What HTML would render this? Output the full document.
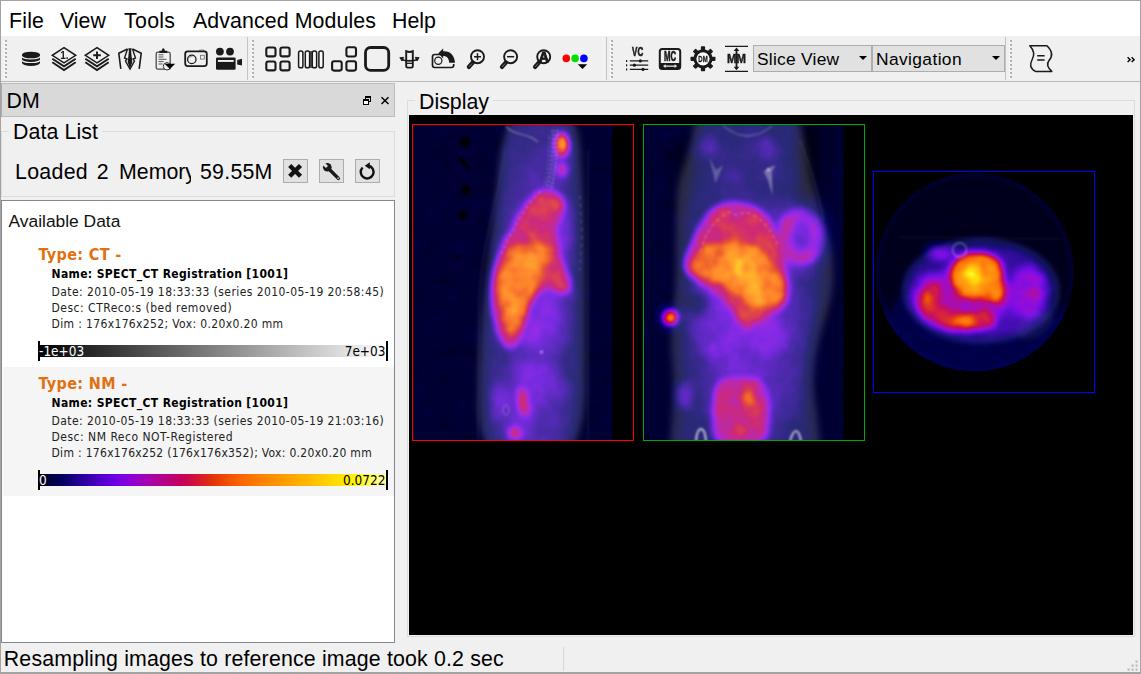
<!DOCTYPE html>
<html lang="en">
<head>
<meta charset="utf-8">
<title>DM - Display</title>
<style>
html,body{margin:0;padding:0;background:#f0f0f0;overflow:hidden;}
body{width:1141px;height:674px;position:relative;font-family:"Liberation Sans",Arial,sans-serif;color:#000;}
.abs{position:absolute;}
#win{position:absolute;left:0;top:0;width:1141px;height:674px;background:#f0f0f0;overflow:hidden;}
#menubar{position:absolute;left:1px;top:1px;width:1139px;height:35px;background:#fff;}
#menubar span{position:absolute;top:1px;line-height:38px;font-size:21.33px;white-space:nowrap;}
#toolbar{position:absolute;left:1px;top:36px;width:1139px;height:45px;background:#f0f0f0;}
.handle{position:absolute;top:4px;width:3px;height:38px;}
.handle:before{content:"";position:absolute;left:0;top:1px;width:2px;height:38px;background-image:repeating-linear-gradient(to bottom,#fff 0,#fff 2px,transparent 2px,transparent 4px);}
.handle:after{content:"";position:absolute;left:1px;top:0;width:2px;height:38px;background-image:repeating-linear-gradient(to bottom,#b0b0b0 0,#b0b0b0 2px,transparent 2px,transparent 4px);}
.tsep{position:absolute;top:1px;width:1px;height:43px;background:#c4c4c4;}
.ico{position:absolute;top:10px;width:26px;height:26px;}
.combo{position:absolute;top:9px;height:27px;box-sizing:border-box;border:1px solid #adadad;background:#e1e1e1;font-size:17.4px;line-height:26px;padding-left:4px;white-space:nowrap;}
.combo i{position:absolute;right:4.5px;top:10px;width:0;height:0;border-left:4px solid transparent;border-right:4px solid transparent;border-top:4px solid #000;}
#dmtitle{position:absolute;left:1px;top:83px;width:394px;height:34px;box-sizing:border-box;background:#d9d9d9;border:1px solid #bdbdbd;border-left-color:#a8a8a8;}
#dmtitle span{position:absolute;left:4.5px;top:0.8px;line-height:33px;font-size:21.33px;}
.gb{position:absolute;box-sizing:border-box;border:1px solid #dcdcdc;}
.gbl{position:absolute;font-size:21.33px;line-height:24px;background:#f0f0f0;white-space:nowrap;}
.btn{position:absolute;top:159px;width:25px;height:24px;box-sizing:border-box;border:1px solid #adadad;background:#e1e1e1;}
#list{position:absolute;left:1px;top:200px;width:394px;height:443px;box-sizing:border-box;border:1px solid #828790;background:#fff;overflow:hidden;}
.tah{font-family:"DejaVu Sans Condensed","DejaVu Sans",sans-serif;}
.item{position:absolute;left:1px;width:391px;height:129px;}
.item div{position:absolute;white-space:nowrap;}
.type{left:35.5px;margin-top:1px;font-weight:bold;font-size:16px;color:#e2700f;letter-spacing:.35px;line-height:20px;}
.nm{left:48.5px;margin-top:1px;font-weight:bold;font-size:12px;letter-spacing:.36px;line-height:16px;color:#000;}
.ln{left:48.5px;margin-top:1px;font-size:12px;letter-spacing:.43px;line-height:16px;color:#222;}
.bar{left:35px;width:350px;height:12px;}
.mk{width:2px;height:20px;background:#000;}
.bt{font-size:13.5px;line-height:14px;letter-spacing:0;}
#view{position:absolute;left:409px;top:115px;width:724px;height:520px;background:#000;overflow:hidden;}
#status{position:absolute;left:1px;top:644px;width:1139px;height:29px;}
#status span{position:absolute;left:2.8px;top:0.7px;line-height:29px;font-size:21.33px;white-space:nowrap;letter-spacing:.165px;}
</style>
</head>
<body>
<div id="win">

<div id="menubar">
<span style="left:8px;letter-spacing:.2px">File</span>
<span style="left:59px">View</span>
<span style="left:123px;letter-spacing:.3px">Tools</span>
<span style="left:192px;letter-spacing:.1px">Advanced Modules</span>
<span style="left:391px">Help</span>
</div>

<div id="toolbar">
<div class="handle" style="left:3px"></div>
<div class="tsep" style="left:246px"></div>
<div class="handle" style="left:250px"></div>
<div class="tsep" style="left:605px"></div>
<div class="handle" style="left:609px"></div>
<div class="tsep" style="left:1004px"></div>
<div class="handle" style="left:1008px"></div>
<svg width="1139" height="45" viewBox="1 36 1139 45" style="position:absolute;left:0;top:0;opacity:.999" font-family="Liberation Sans, Arial, sans-serif">
<g fill="#1a1a1a"><path d="M22,54.8 v8 a9,3.1 0 0 0 18,0 v-8 z"/><ellipse cx="31" cy="54.8" rx="9" ry="3.1"/></g>
<path d="M21.5,55.8 a9.5,3.1 0 0 0 19,0" fill="none" stroke="#f0f0f0" stroke-width="1.1"/><path d="M21.5,59.4 a9.5,3.1 0 0 0 19,0" fill="none" stroke="#f0f0f0" stroke-width="1.1"/>
<g fill="none" stroke="#1a1a1a" stroke-linejoin="miter"><path d="M64,47.6 L75.7,55.3 L64,62.8 L52.3,55.3 Z" stroke-width="1.5"/><path d="M52.3,58.7 L64,66.3 L75.7,58.7" stroke-width="1.9"/><path d="M52.3,62.3 L64,70 L75.7,62.3" stroke-width="1.9"/></g><text x="64.3" y="58.800000000000004" font-size="10" font-weight="bold" text-anchor="middle" fill="#1a1a1a">1.</text>
<g fill="none" stroke="#1a1a1a" stroke-linejoin="miter"><path d="M97,47.6 L108.7,55.3 L97,62.8 L85.3,55.3 Z" stroke-width="1.5"/><path d="M85.3,58.7 L97,66.3 L108.7,58.7" stroke-width="1.9"/><path d="M85.3,62.3 L97,70 L108.7,62.3" stroke-width="1.9"/></g><path d="M93.2,55.3 h7.6 M97,51.6 v7.4" stroke="#1a1a1a" stroke-width="1.9" fill="none"/>
<g fill="none" stroke="#1a1a1a" stroke-width="1.6" stroke-linejoin="miter"><path d="M120.8,68.8 L118.8,53.3 L127.5,49 "/><path d="M139.2,68.8 L141.2,53.3 L132.5,49 "/><path d="M127.5,49 L124.5,58 L127,59 L125.5,61 L130,69 L134.5,61 L133,59 L135.5,58 L132.5,49" stroke-width="1.4"/></g>
<path d="M128.3,48.3 h3.4 l-0.6,3 l1.2,11 l-2.3,6.5 l-2.3,-6.5 l1.2,-11 z" fill="#1a1a1a"/>
<g fill="none" stroke="#4a4a4a" stroke-width="1.3"><rect x="156.2" y="52.2" width="14" height="17" rx="1.8"/></g>
<path d="M159.3,53 v-2.3 h2.3 l0.8,-1.9 a1,1 0 0 1 1.8,0 l0.8,1.9 h2.3 v2.3 z" fill="#1a1a1a"/>
<g stroke="#555" stroke-width="1"><path d="M158.5,54.8 h5"/><path d="M158.5,57 h5"/><path d="M158.5,59.3 h8"/><path d="M158.5,61.6 h5"/><path d="M158.5,64 h4"/></g>
<circle cx="167" cy="66.3" r="3.7" fill="#f0f0f0" stroke="#333" stroke-width="1"/>
<path d="M164.6,63.7 h10.6 l-5.3,5.4 z" fill="#000"/>
<path d="M199.5,51 v-1 h4.5 v1" fill="none" stroke="#999" stroke-width="1"/>
<rect x="185.2" y="51.3" width="21.6" height="14.8" rx="2.5" fill="none" stroke="#1a1a1a" stroke-width="1.8"/>
<circle cx="191.8" cy="59.4" r="4.2" fill="none" stroke="#1a1a1a" stroke-width="1.3"/>
<path d="M189.5,58 a2.6,2.6 0 0 1 3,-1.8" fill="none" stroke="#777" stroke-width="0.8"/>
<rect x="200.5" y="55.3" width="3.8" height="3.8" fill="none" stroke="#777" stroke-width="0.9"/>
<g fill="#1a1a1a"><circle cx="219.9" cy="51.6" r="3.9"/><circle cx="230" cy="51.6" r="3.9"/><rect x="216" y="57.4" width="19.6" height="12.4" rx="1.2"/><path d="M237.2,60 L242,58.8 V65.6 L237.2,64.4 Z"/></g>
<rect x="217.9" y="60" width="15.8" height="1.9" fill="#f4f4f4"/>
<rect x="266.3" y="47.5" width="9.2" height="8.9" rx="2" fill="none" stroke="#1a1a1a" stroke-width="2.1"/>
<rect x="280.4" y="47.5" width="9.2" height="8.9" rx="2" fill="none" stroke="#1a1a1a" stroke-width="2.1"/>
<rect x="266.3" y="61.5" width="9.2" height="8.9" rx="2" fill="none" stroke="#1a1a1a" stroke-width="2.1"/>
<rect x="280.4" y="61.5" width="9.2" height="8.9" rx="2" fill="none" stroke="#1a1a1a" stroke-width="2.1"/>
<rect x="310" y="51" width="2" height="17" fill="#555"/>
<rect x="298.6" y="50.9" width="4.3" height="16.9" rx="1.8" fill="#fafafa" stroke="#1a1a1a" stroke-width="1.5"/>
<rect x="305.3" y="50.9" width="4.3" height="16.9" rx="1.8" fill="#fafafa" stroke="#1a1a1a" stroke-width="1.5"/>
<rect x="312.3" y="50.9" width="4.3" height="16.9" rx="1.8" fill="#fafafa" stroke="#1a1a1a" stroke-width="1.5"/>
<rect x="318.9" y="50.9" width="4.3" height="16.9" rx="1.8" fill="#fafafa" stroke="#1a1a1a" stroke-width="1.5"/>
<rect x="332.1" y="61.3" width="9.6" height="9.3" rx="2" fill="none" stroke="#1a1a1a" stroke-width="2.1"/>
<rect x="346.4" y="47.2" width="9.6" height="9.3" rx="2" fill="none" stroke="#1a1a1a" stroke-width="2.1"/>
<rect x="346.4" y="61.3" width="9.6" height="9.3" rx="2" fill="none" stroke="#1a1a1a" stroke-width="2.1"/>
<rect x="365.5" y="47.5" width="23.2" height="22.8" rx="5" fill="none" stroke="#1a1a1a" stroke-width="2.8"/>
<path d="M406.2,51.2 q3.3,1.6 6.6,0 v15 q0,1.4 -1.4,1.4 h-3.8 q-1.4,0 -1.4,-1.4 z" fill="none" stroke="#1a1a1a" stroke-width="1.9"/>
<path d="M406.5,63.3 h6" stroke="#1a1a1a" stroke-width="1.3"/>
<path d="M401,59.5 q8.5,2.6 17,0" fill="none" stroke="#1a1a1a" stroke-width="1.7"/>
<path d="M399.8,57.6 l4,-0.3 l-1.8,3.6 z M419.2,57.6 l-4,-0.3 l1.8,3.6 z" fill="#1a1a1a" stroke="#1a1a1a" stroke-width="0.8"/>
<path d="M441,54.5 h-6.3 q-2.2,0 -2.2,2.2 v8.6 q0,2.2 2.2,2.2 h16.8 q2.2,0 2.2,-2.2 v-1.3" fill="none" stroke="#1a1a1a" stroke-width="1.7"/>
<circle cx="438.3" cy="60.7" r="3.6" fill="none" stroke="#1a1a1a" stroke-width="1.2"/>
<path d="M438.3,53.2 L443.2,48.6 L443.2,51.2 C450,50.6 454.8,55.5 455,62.8 L449.2,62.8 C449,58.5 447,56 443.2,56 L443.2,58.4 Z" fill="#1a1a1a"/>
<path d="M472.9,62.3 L468.9,66.9" stroke="#1a1a1a" stroke-width="4.3" stroke-linecap="round"/><path d="M471.7,63.9 L469.2,66.7" stroke="#8a8a8a" stroke-width="0.8" stroke-linecap="round"/><circle cx="477.5" cy="56.7" r="6.5" fill="#f0f0f0" stroke="#1a1a1a" stroke-width="1.9"/><path d="M474,56.7 h7 M477.5,53.2 v7" stroke="#1a1a1a" stroke-width="1.5"/>
<path d="M506,62.3 L502,66.9" stroke="#1a1a1a" stroke-width="4.3" stroke-linecap="round"/><path d="M504.8,63.9 L502.3,66.7" stroke="#8a8a8a" stroke-width="0.8" stroke-linecap="round"/><circle cx="510.6" cy="56.7" r="6.5" fill="#f0f0f0" stroke="#1a1a1a" stroke-width="1.9"/><path d="M507,56.7 h7.2" stroke="#1a1a1a" stroke-width="1.5"/>
<path d="M539.1,62.3 L535.1,66.9" stroke="#1a1a1a" stroke-width="4.3" stroke-linecap="round"/><path d="M537.9000000000001,63.9 L535.4000000000001,66.7" stroke="#8a8a8a" stroke-width="0.8" stroke-linecap="round"/><circle cx="543.7" cy="56.7" r="6.5" fill="#f0f0f0" stroke="#1a1a1a" stroke-width="1.9"/><text x="543.7" y="61.7" font-size="14" font-weight="bold" text-anchor="middle" fill="#1a1a1a" stroke="#1a1a1a" stroke-width="0.9">A</text>
<circle cx="566.3" cy="58.4" r="3.8" fill="#ff0000"/><circle cx="575.1" cy="58.4" r="3.8" fill="#00e000"/><circle cx="583.9" cy="58.4" r="3.8" fill="#0000ff"/>
<path d="M577.8,64.2 h9.4 l-4.7,4.8 z" fill="#000"/>
<text x="637.7" y="56.1" font-size="12.6" font-weight="bold" text-anchor="middle" fill="#1a1a1a" transform="translate(637.7 0) scale(0.64 1) translate(-637.7 0)" stroke="#1a1a1a" stroke-width="0.6">VC</text>
<g stroke="#1a1a1a" stroke-width="1.2"><path d="M629.8,60.9 h18.4 M629.8,65.2 h18.4 M629.8,69.4 h18.4"/></g>
<g fill="#1a1a1a"><circle cx="640.3" cy="60.9" r="1.6"/><circle cx="634.4" cy="65.2" r="1.6"/><circle cx="643" cy="69.4" r="1.6"/><rect x="626" y="60" width="1.2" height="2"/><rect x="626" y="64.3" width="1.2" height="2"/><rect x="626" y="68.5" width="1.2" height="2"/></g>
<rect x="659.8" y="49" width="20.4" height="20" rx="2.5" fill="none" stroke="#1a1a1a" stroke-width="2"/>
<rect x="659.8" y="63" width="20.4" height="6" fill="#1a1a1a"/>
<path d="M663,66.1 l2.6,-1.8 v1.1 h9 v-1.1 l2.6,1.8 l-2.6,1.8 v-1.1 h-9 v1.1 z" fill="#e8e8e8"/>
<text x="670" y="61" font-size="15" font-weight="bold" text-anchor="middle" fill="#1a1a1a" transform="translate(670 0) scale(0.52 1) translate(-670 0)" stroke="#1a1a1a" stroke-width="0.7">MC</text>
<g fill="#1a1a1a"><rect x="700.9" y="46.3" width="4.2" height="5" rx="0.8" transform="rotate(0 703 58.8)"/><rect x="700.9" y="46.3" width="4.2" height="5" rx="0.8" transform="rotate(45 703 58.8)"/><rect x="700.9" y="46.3" width="4.2" height="5" rx="0.8" transform="rotate(90 703 58.8)"/><rect x="700.9" y="46.3" width="4.2" height="5" rx="0.8" transform="rotate(135 703 58.8)"/><rect x="700.9" y="46.3" width="4.2" height="5" rx="0.8" transform="rotate(180 703 58.8)"/><rect x="700.9" y="46.3" width="4.2" height="5" rx="0.8" transform="rotate(225 703 58.8)"/><rect x="700.9" y="46.3" width="4.2" height="5" rx="0.8" transform="rotate(270 703 58.8)"/><rect x="700.9" y="46.3" width="4.2" height="5" rx="0.8" transform="rotate(315 703 58.8)"/></g>
<circle cx="703" cy="58.8" r="8.1" fill="#fff" stroke="#1a1a1a" stroke-width="3"/>
<text x="703" y="61.8" font-size="8.6" font-weight="bold" text-anchor="middle" fill="#1a1a1a" transform="translate(703 0) scale(0.7 1) translate(-703 0)" stroke="#1a1a1a" stroke-width="0.3">DM</text>
<path d="M725,46.4 h23 M725,71.4 h23" stroke="#1a1a1a" stroke-width="1.1"/>
<path d="M736.5,49 v20" stroke="#1a1a1a" stroke-width="1.8"/>
<path d="M736.5,47.6 l2.8,3.4 h-5.6 z M736.5,70.2 l2.8,-3.4 h-5.6 z" fill="#1a1a1a"/>
<text x="736.5" y="63.4" font-size="12.6" font-weight="bold" text-anchor="middle" fill="#1a1a1a" transform="translate(736.5 0) scale(0.9 1) translate(-736.5 0)" stroke="#1a1a1a" stroke-width="0.4">MM</text>
<path d="M1029.8,45.7 H1047 C1052.5,51 1053,56 1049,60.5 C1046.5,63.8 1047.5,67.5 1051.8,71.4 H1035.5 C1030,68.5 1029.5,64.5 1032,60 C1035,54.5 1034,50 1029.8,45.7 Z" fill="none" stroke="#1a1a1a" stroke-width="1.5" stroke-linejoin="round"/>
<path d="M1037.2,55.8 h7.4 M1037.2,60 h7.4" stroke="#1a1a1a" stroke-width="1.5"/>
<path d="M1127.6,57.3 l2.5,2.4 l-2.5,2.4 M1131.6,57.3 l2.5,2.4 l-2.5,2.4" fill="none" stroke="#000" stroke-width="1.4"/>
</svg>
<div class="combo" style="left:752px;width:119px;padding-left:3px;letter-spacing:.25px">Slice View<i></i></div>
<div class="combo" style="left:871px;width:133px;padding-left:3px;letter-spacing:.38px">Navigation<i></i></div>
</div>
<div class="abs" style="left:1px;top:81px;width:1139px;height:1px;background:#b9b9b9"></div>

<div id="dmtitle"><span>DM</span>
<svg width="394" height="34" viewBox="1 83 394 34" style="position:absolute;left:-1px;top:-1px">
<rect x="365.500" y="96.500" width="5" height="5" fill="none" stroke="#000" stroke-width="1"/><rect x="365" y="96" width="6" height="2" fill="#000"/>
<rect x="363.500" y="99.500" width="5" height="5" fill="#fff" stroke="#000" stroke-width="1"/><rect x="363" y="99" width="6" height="2" fill="#000"/>
<path d="M381.500,97.300 L388.500,104 M388.500,97.300 L381.500,104" stroke="#000" stroke-width="1.500" fill="none"/>
</svg>

</div>

<div class="gb" style="left:1px;top:131px;width:394px;height:66px"></div>
<div class="gbl" style="left:9px;top:119.5px;padding:0 4px;letter-spacing:.1px">Data List</div>
<div class="abs" style="left:15px;top:159.5px;font-size:21.33px;line-height:24px;white-space:nowrap;letter-spacing:.3px">Loaded</div>
<div class="abs" style="left:96.7px;top:159.5px;font-size:21.33px;line-height:24px;white-space:nowrap">2</div>
<div class="abs" style="left:119px;top:159.5px;width:72px;overflow:hidden;font-size:21.33px;line-height:24px;white-space:nowrap">Memory</div>
<div class="abs" style="left:200px;top:159.5px;font-size:21.33px;line-height:24px;white-space:nowrap;letter-spacing:.25px">59.55M</div>
<div class="btn" style="left:283px"></div>
<div class="btn" style="left:319px"></div>
<div class="btn" style="left:355px"></div>
<svg width="120" height="40" viewBox="276 150 120 40" style="position:absolute;left:276px;top:150px">
<path d="M289.700,165.500 L300.500,176.300 M300.500,165.500 L289.700,176.300" stroke="#111" stroke-width="4.400" fill="none"/>
<g transform="translate(327.300 167.300) rotate(-45)"><path d="M-1.700,2 h3.400 v13.600 a1.700,1.700 0 0 1 -3.400,0 z" fill="#1a1a1a"/><circle cx="0" cy="0" r="4.300" fill="#1a1a1a"/><rect x="-1.500" y="-5.500" width="3" height="5" fill="#e1e1e1"/><circle cx="0" cy="15.300" r="0.750" fill="#e1e1e1"/></g>
<path d="M362.600,167.500 A6.400,6.400 0 1 0 368.500,165.750" fill="none" stroke="#111" stroke-width="2.400"/>
<path d="M364.800,165.700 L369.800,162.200 L369.800,169.200 Z" fill="#111"/>
</svg>


<div id="list">
<div class="abs" style="left:6.5px;top:8.5px;font-size:17.4px;line-height:22px;white-space:nowrap;color:#111">Available Data</div>
<div class="item tah" style="top:37px;background:#fff">
 <div class="type" style="top:6px">Type: CT -</div>
 <div class="nm" style="top:27px">Name: SPECT_CT Registration [1001]</div>
 <div class="ln" style="top:45px">Date: 2010-05-19 18:33:33 (series 2010-05-19 20:58:45)</div>
 <div class="ln" style="top:61px;letter-spacing:.5px">Desc: CTReco:s (bed removed)</div>
 <div class="ln" style="top:77px;letter-spacing:.36px">Dim : 176x176x252; Vox: 0.20x0.20 mm</div>
 <div class="bar" style="top:107px;background:linear-gradient(to right,#000,#fff)"></div>
 <div class="mk" style="left:35px;top:103px"></div>
 <div class="mk" style="left:383px;top:103px"></div>
 <div class="bt" style="left:36px;top:105.500px;color:#fff">-1e+03</div>
 <div class="bt" style="right:8.500px;top:105.500px;color:#000">7e+03</div>
</div>
<div class="item tah" style="top:166px;background:#f5f5f5">
 <div class="type" style="top:6px">Type: NM -</div>
 <div class="nm" style="top:27px">Name: SPECT_CT Registration [1001]</div>
 <div class="ln" style="top:45px">Date: 2010-05-19 18:33:33 (series 2010-05-19 21:03:16)</div>
 <div class="ln" style="top:61px;letter-spacing:.5px">Desc: NM Reco NOT-Registered</div>
 <div class="ln" style="top:77px;letter-spacing:.3px">Dim : 176x176x252 (176x176x352); Vox: 0.20x0.20 mm</div>
 <div class="bar" style="top:107px;background:linear-gradient(to right,#000000 0.0%,#00003d 3.4%,#010060 6.8%,#190082 10.2%,#3100a5 13.6%,#4900c0 17.0%,#6200dc 20.4%,#7a00e3 23.8%,#9200d2 27.2%,#a200b5 30.6%,#ad0097 34.0%,#b8007a 37.4%,#c3005d 40.7%,#cf0e40 44.1%,#d92323 47.5%,#e53905 50.9%,#f04f00 54.3%,#fc6500 57.7%,#ff7500 61.1%,#ff8500 64.5%,#ff9300 67.9%,#ffa100 71.3%,#ffaf00 74.7%,#ffbe00 78.1%,#ffcd00 81.5%,#ffdb00 84.9%,#ffea00 88.3%,#fff823 91.7%,#ffff62 95.1%,#ffffa0 98.5%)"></div>
 <div class="mk" style="left:35px;top:103px"></div>
 <div class="mk" style="left:383px;top:103px"></div>
 <div class="bt" style="left:36px;top:105.500px;color:#fff">0</div>
 <div class="bt" style="right:8.500px;top:105.500px;color:#000">0.0722</div>
</div>
</div>

<div class="gb" style="left:407px;top:100px;width:728px;height:537px"></div>
<div class="gbl" style="left:415px;top:89.5px;padding:0 4px">Display</div>
<div id="view">
<svg width="725" height="520" viewBox="409 115 725 520" style="position:absolute;left:0;top:0">
<defs>
<filter id="fire" x="409" y="115" width="725" height="520" filterUnits="userSpaceOnUse" color-interpolation-filters="sRGB"><feTurbulence type="fractalNoise" baseFrequency="0.055" numOctaves="2" seed="7" result="n"/><feColorMatrix in="n" type="matrix" values="1 0 0 0 0  1 0 0 0 0  1 0 0 0 0  0 0 0 0 1" result="ng"/><feComposite in="SourceGraphic" in2="ng" operator="arithmetic" k1="0.44" k2="0.77" k3="0" k4="0"/><feComponentTransfer><feFuncR type="table" tableValues="0.000 0.000 0.004 0.098 0.192 0.286 0.384 0.478 0.573 0.635 0.678 0.722 0.765 0.812 0.851 0.898 0.941 0.988 1.000 1.000 1.000 1.000 1.000 1.000 1.000 1.000 1.000 1.000 1.000 1.000 1.000 1.000"/><feFuncG type="table" tableValues="0.000 0.000 0.000 0.000 0.000 0.000 0.000 0.000 0.000 0.000 0.000 0.000 0.000 0.055 0.137 0.224 0.310 0.396 0.459 0.522 0.576 0.631 0.686 0.745 0.804 0.859 0.918 0.973 1.000 1.000 1.000 1.000"/><feFuncB type="table" tableValues="0.000 0.239 0.376 0.510 0.647 0.753 0.863 0.890 0.824 0.710 0.592 0.478 0.365 0.251 0.137 0.020 0.000 0.000 0.000 0.000 0.000 0.000 0.000 0.000 0.000 0.000 0.000 0.137 0.384 0.627 0.875 1.000"/></feComponentTransfer></filter>
<filter id="b1" x="409" y="115" width="725" height="520" filterUnits="userSpaceOnUse" color-interpolation-filters="sRGB"><feGaussianBlur stdDeviation="0.8"/></filter>
<filter id="b2" x="409" y="115" width="725" height="520" filterUnits="userSpaceOnUse" color-interpolation-filters="sRGB"><feGaussianBlur stdDeviation="2"/></filter>
<filter id="b3" x="409" y="115" width="725" height="520" filterUnits="userSpaceOnUse" color-interpolation-filters="sRGB"><feGaussianBlur stdDeviation="3"/></filter>
<filter id="b4" x="409" y="115" width="725" height="520" filterUnits="userSpaceOnUse" color-interpolation-filters="sRGB"><feGaussianBlur stdDeviation="4"/></filter>
<filter id="b6" x="409" y="115" width="725" height="520" filterUnits="userSpaceOnUse" color-interpolation-filters="sRGB"><feGaussianBlur stdDeviation="6"/></filter>
<filter id="b9" x="409" y="115" width="725" height="520" filterUnits="userSpaceOnUse" color-interpolation-filters="sRGB"><feGaussianBlur stdDeviation="9"/></filter>
<filter id="b14" x="409" y="115" width="725" height="520" filterUnits="userSpaceOnUse" color-interpolation-filters="sRGB"><feGaussianBlur stdDeviation="14"/></filter>
<clipPath id="c1"><rect x="413" y="125" width="220" height="315"/></clipPath>
<clipPath id="c2"><rect x="644" y="125" width="220" height="315"/></clipPath>
<clipPath id="c3"><rect x="874" y="172" width="220" height="220"/></clipPath>
<clipPath id="c3c"><circle cx="974.5" cy="272" r="99.5"/></clipPath>
</defs>
<g clip-path="url(#c1)">
<g filter="url(#fire)"><rect x="413" y="125" width="221" height="315" fill="#000"/><rect x="413" y="125" width="199.5" height="315" fill="#fff" opacity="0.026"/><g filter="url(#b4)"><path d="M503.0,165.0 Q509.1,100.0 540.4,100.0 Q571.6,100.0 574.7,150.0 Q577.8,200.0 578.6,250.0 Q579.5,300.0 579.1,385.0 Q578.6,470.0 531.1,470.0 Q483.6,470.0 484.5,400.0 Q485.4,330.0 491.1,280.0 Q496.8,230.0 503.0,165.0Z" fill="#fff" opacity="0.055"/></g><g filter="url(#b9)"><ellipse cx="533" cy="280" rx="32" ry="120" fill="#fff" opacity="0.035"/><ellipse cx="535" cy="270" rx="34" ry="85" fill="#fff" opacity="0.03" transform="rotate(10 535 270)"/><ellipse cx="546" cy="165" rx="17" ry="42" fill="#fff" opacity="0.02"/><ellipse cx="532" cy="410" rx="32" ry="50" fill="#fff" opacity="0.05"/></g><g filter="url(#b6)"><ellipse cx="532" cy="272" rx="34" ry="80" fill="#fff" opacity="0.06" transform="rotate(12 532 272)"/><ellipse cx="550" cy="222" rx="24" ry="32" fill="#fff" opacity="0.045"/><ellipse cx="561" cy="158" rx="8" ry="26" fill="#fff" opacity="0.1"/><ellipse cx="548" cy="330" rx="22" ry="26" fill="#fff" opacity="0.06"/><ellipse cx="550" cy="385" rx="18" ry="20" fill="#fff" opacity="0.05"/><ellipse cx="500" cy="402" rx="8" ry="20" fill="#fff" opacity="0.1"/><ellipse cx="524" cy="404" rx="12" ry="26" fill="#fff" opacity="0.09"/><ellipse cx="518" cy="434" rx="12" ry="7" fill="#fff" opacity="0.1"/><ellipse cx="562" cy="290" rx="12" ry="14" fill="#fff" opacity="0.07"/><ellipse cx="530" cy="365" rx="18" ry="12" fill="#fff" opacity="0.05"/></g><g filter="url(#b3)"><path d="M530.0,200.0 Q536.0,192.0 543.5,191.0 Q551.0,190.0 557.5,193.5 Q564.0,197.0 564.5,203.0 Q565.0,209.0 561.5,215.5 Q558.0,222.0 556.5,229.0 Q555.0,236.0 557.0,244.0 Q559.0,252.0 561.5,259.0 Q564.0,266.0 567.5,273.0 Q571.0,280.0 570.5,286.0 Q570.0,292.0 565.0,293.0 Q560.0,294.0 554.0,290.5 Q548.0,287.0 542.0,290.5 Q536.0,294.0 532.5,302.0 Q529.0,310.0 526.0,320.0 Q523.0,330.0 520.0,338.0 Q517.0,346.0 512.5,347.5 Q508.0,349.0 504.0,343.5 Q500.0,338.0 496.5,328.0 Q493.0,318.0 491.5,304.0 Q490.0,290.0 491.5,279.0 Q493.0,268.0 496.5,259.0 Q500.0,250.0 506.0,239.0 Q512.0,228.0 518.0,218.0 Q524.0,208.0 530.0,200.0Z" fill="#fff" opacity="0.26"/><ellipse cx="562" cy="145" rx="6.5" ry="12.5" fill="#fff" opacity="0.32"/><ellipse cx="562" cy="170" rx="5" ry="5.5" fill="#fff" opacity="0.26"/><ellipse cx="523" cy="401" rx="4.5" ry="15" fill="#fff" opacity="0.26" transform="rotate(-6 523 401)"/><ellipse cx="515" cy="433" rx="6" ry="5.5" fill="#fff" opacity="0.34"/></g><g filter="url(#b3)"><path d="M506.0,252.0 Q510.0,246.0 520.0,243.5 Q530.0,241.0 538.5,243.0 Q547.0,245.0 550.0,250.5 Q553.0,256.0 550.0,263.0 Q547.0,270.0 542.0,275.0 Q537.0,280.0 534.0,288.0 Q531.0,296.0 528.0,306.0 Q525.0,316.0 522.0,324.0 Q519.0,332.0 514.0,334.5 Q509.0,337.0 505.0,329.5 Q501.0,322.0 498.5,311.0 Q496.0,300.0 496.5,288.0 Q497.0,276.0 499.5,267.0 Q502.0,258.0 506.0,252.0Z" fill="#fff" opacity="0.24"/><ellipse cx="553" cy="203" rx="8" ry="7" fill="#fff" opacity="0.1"/><ellipse cx="562" cy="145" rx="4.5" ry="9.5" fill="#fff" opacity="0.33"/></g><g filter="url(#b2)"><path d="M505.5,269.0 Q508.0,262.0 516.0,257.0 Q524.0,252.0 531.0,254.0 Q538.0,256.0 537.0,264.0 Q536.0,272.0 531.0,278.0 Q526.0,284.0 523.0,294.0 Q520.0,304.0 517.0,311.0 Q514.0,318.0 510.0,317.0 Q506.0,316.0 504.0,306.0 Q502.0,296.0 502.5,286.0 Q503.0,276.0 505.5,269.0Z" fill="#fff" opacity="0.1"/><ellipse cx="562" cy="144" rx="2.5" ry="7" fill="#fff" opacity="0.12"/></g></g>
<g style="mix-blend-mode:screen"><g filter="url(#b3)"><path d="M499.0,165.0 Q506.0,100.0 541.5,100.0 Q577.0,100.0 580.5,150.0 Q584.0,200.0 585.0,250.0 Q586.0,300.0 585.5,385.0 Q585.0,470.0 531.0,470.0 Q477.0,470.0 478.0,400.0 Q479.0,330.0 485.5,280.0 Q492.0,230.0 499.0,165.0Z" fill="#a0a0a8" opacity="0.27"/></g><g filter="url(#b1)"><path d="M553,130 C554,150 551,172 547,188" stroke="#cdd6ff" stroke-width="2.6" stroke-dasharray="1.6 2.6" fill="none" opacity=".42"/><path d="M557,128 C558,150 555,172 551,190" stroke="#cdd6ff" stroke-width="2.6" stroke-dasharray="1.8 2.2" stroke-dashoffset="2" fill="none" opacity=".38"/><path d="M549,134 C550,150 548,170 544,186" stroke="#cdd6ff" stroke-width="2" stroke-dasharray="1.4 3" stroke-dashoffset="1" fill="none" opacity=".3"/><path d="M540,192 C526,206 512,228 500,258" stroke="#e8d8d0" stroke-width="1.8" stroke-dasharray="1.5 5" fill="none" opacity=".36"/><path d="M506,126 C512,136 528,132 538,142" stroke="#ddd" stroke-width="1.5" fill="none" opacity=".4"/><path d="M580,196 l2,40 l-2,34" stroke="#ccc" stroke-width="1.3" stroke-dasharray="3 5" fill="none" opacity=".28"/><path d="M588,150 L588,440" stroke="#999" stroke-width="1.5" fill="none" opacity=".12"/><path d="M505,150 C498,200 482,240 479,300 L478,440" stroke="#999" stroke-width="1.5" fill="none" opacity=".12"/><circle cx="541.5" cy="352" r="1.2" fill="#cfe" opacity=".8"/><ellipse cx="506" cy="410" rx="3" ry="5" fill="none" stroke="#cc9" stroke-width="1" opacity=".4"/></g></g>
<g filter="url(#b1)"><ellipse cx="465" cy="142" rx="5" ry="5.5" fill="#000" opacity="0.95"/><ellipse cx="464" cy="163" rx="2.5" ry="8" fill="#000" opacity="0.9" transform="rotate(-40 464 163)"/><ellipse cx="466" cy="190" rx="4" ry="5" fill="#000" opacity="0.9"/><ellipse cx="463" cy="215" rx="4" ry="5" fill="#000" opacity="0.9" transform="rotate(25 463 215)"/><ellipse cx="458" cy="257" rx="2" ry="2" fill="#000" opacity="0.9"/></g>
</g>
<rect x="412.5" y="124.5" width="221" height="316" fill="none" stroke="#ff0000" stroke-width="1"/>
<g clip-path="url(#c2)">
<g filter="url(#fire)"><rect x="644" y="125" width="221" height="315" fill="#000"/><rect x="644" y="125" width="199.5" height="315" fill="#fff" opacity="0.026"/><g filter="url(#b4)"><path d="M701.8,125.0 Q705.3,100.0 747.4,100.0 Q789.6,100.0 793.9,125.0 Q798.2,150.0 800.7,167.5 Q803.3,185.0 808.5,202.5 Q813.6,220.0 817.9,240.0 Q822.2,260.0 821.4,280.0 Q820.5,300.0 814.5,320.0 Q808.5,340.0 805.9,360.0 Q803.3,380.0 805.9,400.0 Q808.5,420.0 810.2,445.0 Q811.9,470.0 745.7,470.0 Q679.5,470.0 681.2,445.0 Q682.9,420.0 683.8,400.0 Q684.6,380.0 682.9,360.0 Q681.2,340.0 683.8,315.0 Q686.4,290.0 686.4,255.0 Q686.4,220.0 687.2,200.0 Q688.1,180.0 693.2,165.0 Q698.4,150.0 701.8,125.0Z" fill="#fff" opacity="0.04"/></g><g filter="url(#b14)"><ellipse cx="750" cy="340" rx="54" ry="110" fill="#fff" opacity="0.065"/><ellipse cx="750" cy="200" rx="46" ry="80" fill="#fff" opacity="0.02"/><ellipse cx="748" cy="290" rx="52" ry="80" fill="#fff" opacity="0.04"/></g><g filter="url(#b9)"><ellipse cx="742" cy="262" rx="50" ry="60" fill="#fff" opacity="0.045"/><ellipse cx="801" cy="237" rx="30" ry="36" fill="#fff" opacity="0.055"/><ellipse cx="742" cy="405" rx="30" ry="42" fill="#fff" opacity="0.05"/><ellipse cx="745" cy="340" rx="48" ry="28" fill="#fff" opacity="0.03"/></g><g filter="url(#b6)"><ellipse cx="740" cy="260" rx="44" ry="54" fill="#fff" opacity="0.055" transform="rotate(-15 740 260)"/><ellipse cx="801" cy="237" rx="24" ry="28" fill="#fff" opacity="0.065"/><ellipse cx="742" cy="415" rx="26" ry="38" fill="#fff" opacity="0.065"/><ellipse cx="707" cy="146" rx="9" ry="9" fill="#fff" opacity="0.09"/><ellipse cx="766" cy="148" rx="9" ry="9" fill="#fff" opacity="0.09"/><ellipse cx="733" cy="174" rx="10" ry="6" fill="#fff" opacity="0.07"/><ellipse cx="684" cy="395" rx="5" ry="13" fill="#fff" opacity="0.2"/><ellipse cx="670.3" cy="317.5" rx="10" ry="10" fill="#fff" opacity="0.16"/><ellipse cx="720" cy="350" rx="16" ry="10" fill="#fff" opacity="0.06"/><ellipse cx="770" cy="345" rx="16" ry="10" fill="#fff" opacity="0.06"/><ellipse cx="760" cy="322" rx="20" ry="14" fill="#fff" opacity="0.08"/><ellipse cx="700" cy="330" rx="12" ry="10" fill="#fff" opacity="0.05"/><ellipse cx="808" cy="165" rx="11" ry="45" fill="#000" opacity="0.55" transform="rotate(8 808 165)"/><ellipse cx="686" cy="175" rx="8" ry="30" fill="#000" opacity="0.4" transform="rotate(-8 686 175)"/></g><g filter="url(#b3)"><path d="M713.0,208.0 Q718.0,203.0 730.5,202.5 Q743.0,202.0 755.0,207.5 Q767.0,213.0 772.0,225.0 Q777.0,237.0 779.5,249.5 Q782.0,262.0 787.0,276.5 Q792.0,291.0 787.0,301.0 Q782.0,311.0 769.5,315.5 Q757.0,320.0 752.5,325.5 Q748.0,331.0 743.0,325.5 Q738.0,320.0 730.5,308.0 Q723.0,296.0 711.0,289.0 Q699.0,282.0 690.5,277.0 Q682.0,272.0 684.0,262.0 Q686.0,252.0 692.5,240.0 Q699.0,228.0 703.5,220.5 Q708.0,213.0 713.0,208.0Z" fill="#fff" opacity="0.26"/><path d="M714.0,395.0 Q716.0,380.0 728.0,378.0 Q740.0,376.0 753.0,379.0 Q766.0,382.0 768.0,396.0 Q770.0,410.0 768.0,430.0 Q766.0,450.0 740.0,450.0 Q714.0,450.0 713.0,430.0 Q712.0,410.0 714.0,395.0Z" fill="#fff" opacity="0.2"/><ellipse cx="670.3" cy="317.5" rx="6.5" ry="6.5" fill="#fff" opacity="0.4"/></g><g filter="url(#b3)"><ellipse cx="800" cy="237" rx="17" ry="22" fill="none" stroke="#fff" stroke-width="12" opacity=".12"/><ellipse cx="787" cy="226" rx="7" ry="10" fill="#fff" opacity=".1"/><ellipse cx="806" cy="257" rx="10" ry="6" fill="#fff" opacity=".08"/><ellipse cx="696" cy="302" rx="13" ry="10" fill="#000" opacity="0.4"/></g><g filter="url(#b3)"><path d="M690.0,267.5 Q691.0,262.0 697.5,253.5 Q704.0,245.0 716.0,242.5 Q728.0,240.0 742.5,242.5 Q757.0,245.0 764.5,253.5 Q772.0,262.0 779.5,276.5 Q787.0,291.0 783.0,299.0 Q779.0,307.0 768.0,307.5 Q757.0,308.0 750.0,304.5 Q743.0,301.0 735.5,293.5 Q728.0,286.0 718.0,282.5 Q708.0,279.0 698.5,276.0 Q689.0,273.0 690.0,267.5Z" fill="#fff" opacity="0.25"/><ellipse cx="724" cy="212" rx="5" ry="5" fill="#fff" opacity="0.2"/><ellipse cx="747.5" cy="400" rx="7" ry="8" fill="#fff" opacity="0.22"/><ellipse cx="738" cy="430" rx="7" ry="6" fill="#fff" opacity="0.15"/><ellipse cx="670.3" cy="317.5" rx="4.2" ry="4.2" fill="#fff" opacity="0.45"/></g><g filter="url(#b2)"><path d="M719.0,264.0 Q716.0,256.0 727.0,253.0 Q738.0,250.0 745.0,254.0 Q752.0,258.0 756.0,268.0 Q760.0,278.0 762.0,286.0 Q764.0,294.0 757.0,295.0 Q750.0,296.0 744.0,290.0 Q738.0,284.0 730.0,278.0 Q722.0,272.0 719.0,264.0Z" fill="#fff" opacity="0.12"/><ellipse cx="738" cy="268" rx="5.5" ry="10" fill="#fff" opacity="0.32"/><ellipse cx="738" cy="267" rx="3" ry="6" fill="#fff" opacity="0.25"/></g></g>
<g style="mix-blend-mode:screen"><g filter="url(#b3)"><path d="M694.0,125.0 Q698.0,100.0 747.0,100.0 Q796.0,100.0 801.0,125.0 Q806.0,150.0 809.0,167.5 Q812.0,185.0 818.0,202.5 Q824.0,220.0 829.0,240.0 Q834.0,260.0 833.0,280.0 Q832.0,300.0 825.0,320.0 Q818.0,340.0 815.0,360.0 Q812.0,380.0 815.0,400.0 Q818.0,420.0 820.0,445.0 Q822.0,470.0 745.0,470.0 Q668.0,470.0 670.0,445.0 Q672.0,420.0 673.0,400.0 Q674.0,380.0 672.0,360.0 Q670.0,340.0 673.0,315.0 Q676.0,290.0 676.0,255.0 Q676.0,220.0 677.0,200.0 Q678.0,180.0 684.0,165.0 Q690.0,150.0 694.0,125.0Z" fill="#a0a0a8" opacity="0.26"/></g><g filter="url(#b1)"><path d="M709.6,157.8 L716,170 L723.2,165.5 L715.5,183 Z" fill="#d8d4c0" opacity=".3"/><path d="M763.6,171.5 L768.3,168 L775.5,165 L772,172 L772.5,196 L768,180 Z" fill="#e8e4d0" opacity=".38"/><circle cx="768.3" cy="169.7" r="1.6" fill="#fff" opacity=".6"/><path d="M723,125.500 Q747,146 772,126" stroke="#ccc" stroke-width="1.600" fill="none" opacity=".3"/><path d="M696,441 q1,-12 5,-12 q4,0 5,12" stroke="#fff" stroke-width="2.2" fill="none" opacity=".7"/><path d="M790,441 q3,-10 6,-10 q3,0 5,10" stroke="#fff" stroke-width="2.2" fill="none" opacity=".65"/><path d="M700,252 q8,-30 30,-40 q8,6 14,0 q22,4 34,34" stroke="#dde" stroke-width="1.2" stroke-dasharray="4 3" fill="none" opacity=".35"/><path d="M800,140 q16,40 24,80" stroke="#bbb" stroke-width="2" fill="none" opacity=".1"/></g></g>
</g>
<rect x="643.5" y="124.5" width="221" height="316" fill="none" stroke="#00a800" stroke-width="1"/>
<g clip-path="url(#c3)">
<g filter="url(#fire)"><rect x="874" y="172" width="221" height="221" fill="#000"/><g clip-path="url(#c3c)"><rect x="874" y="172" width="221" height="221" fill="#fff" opacity=".014"/><g filter="url(#b9)"><ellipse cx="975" cy="335" rx="100" ry="50" fill="#fff" opacity="0.03"/><ellipse cx="975" cy="272" rx="99" ry="99" fill="#fff" opacity="0.0"/></g><circle cx="974.5" cy="272" r="97" fill="none" stroke="#fff" stroke-width="5" opacity=".012"/></g><g filter="url(#b6)"><ellipse cx="980" cy="291" rx="74" ry="48" fill="#fff" opacity="0.12"/></g><g filter="url(#b4)"><ellipse cx="960" cy="298" rx="48" ry="32" fill="#fff" opacity="0.13"/><ellipse cx="1028" cy="291" rx="19" ry="25" fill="#fff" opacity="0.12"/><ellipse cx="940" cy="252" rx="14" ry="6" fill="#fff" opacity="0.18"/><ellipse cx="978" cy="276" rx="28" ry="26" fill="#fff" opacity="0.06"/><ellipse cx="936" cy="268" rx="12" ry="8" fill="#000" opacity="0.25"/></g><g filter="url(#b3)"><path d="M932,292 C924,300 928,312 944,318 C958,323 974,322 986,318" fill="none" stroke="#fff" stroke-width="20" stroke-linecap="round" opacity=".235"/><ellipse cx="948" cy="300" rx="12" ry="8" fill="#fff" opacity="0.08"/><path d="M951.0,269.0 Q952.0,262.0 959.0,257.0 Q966.0,252.0 977.0,252.0 Q988.0,252.0 995.0,257.0 Q1002.0,262.0 1004.0,271.0 Q1006.0,280.0 1005.5,289.0 Q1005.0,298.0 1001.5,302.0 Q998.0,306.0 992.0,303.0 Q986.0,300.0 977.0,300.0 Q968.0,300.0 961.0,296.0 Q954.0,292.0 952.0,284.0 Q950.0,276.0 951.0,269.0Z" fill="#fff" opacity="0.28"/><ellipse cx="1034" cy="295" rx="7" ry="6" fill="#fff" opacity="0.15"/></g><g filter="url(#b3)"><path d="M955.0,270.0 Q956.0,264.0 962.0,259.5 Q968.0,255.0 977.0,255.0 Q986.0,255.0 992.5,259.5 Q999.0,264.0 1000.5,272.0 Q1002.0,280.0 1001.5,288.0 Q1001.0,296.0 997.0,298.5 Q993.0,301.0 988.5,297.5 Q984.0,294.0 976.0,295.0 Q968.0,296.0 962.5,292.0 Q957.0,288.0 955.5,282.0 Q954.0,276.0 955.0,270.0Z" fill="#fff" opacity="0.3"/><ellipse cx="966" cy="321" rx="11" ry="5" fill="#fff" opacity="0.26"/><ellipse cx="927.7" cy="301" rx="5" ry="5" fill="#fff" opacity="0.2"/></g><g filter="url(#b2)"><ellipse cx="972" cy="274" rx="10" ry="11" fill="#fff" opacity="0.25"/><ellipse cx="970" cy="272" rx="5" ry="5" fill="#fff" opacity="0.4"/><ellipse cx="970" cy="272" rx="3" ry="3" fill="#fff" opacity="0.35"/><ellipse cx="992" cy="275" rx="5" ry="8" fill="#fff" opacity="0.08"/></g></g>
<g style="mix-blend-mode:screen"><g filter="url(#b2)"><ellipse cx="981" cy="291" rx="77" ry="51" fill="none" stroke="#aaa" stroke-width="4" opacity=".12"/><ellipse cx="1035" cy="325" rx="20" ry="12" fill="#aaa" opacity="0.08" transform="rotate(-30 1035 325)"/><ellipse cx="981" cy="291" rx="76" ry="50" fill="#aaa" opacity="0.08"/></g><g filter="url(#b1)"><circle cx="959.6" cy="250" r="7" fill="none" stroke="#ccd" stroke-width="1.5" opacity=".42"/><path d="M900,237 L1060,239" stroke="#777" stroke-width="1" opacity=".15"/></g></g>
</g>
<rect x="873.5" y="171.5" width="221" height="221" fill="none" stroke="#0000f8" stroke-width="1"/>
</svg>
</div>

<div id="status"><span>Resampling images to reference image took 0.2 sec</span>
<div class="abs" style="left:562px;top:3px;width:1px;height:24px;background:#d7d7d7"></div>
</div>

<svg class="abs" style="left:1126px;top:658px" width="14" height="14" viewBox="1126 658 14 14"><g fill="#bcbcbc"><rect x="1135.500" y="660.500" width="2.200" height="2.200"/><rect x="1131.500" y="664.500" width="2.200" height="2.200"/><rect x="1135.500" y="664.500" width="2.200" height="2.200"/><rect x="1127.500" y="668.500" width="2.200" height="2.200"/><rect x="1131.500" y="668.500" width="2.200" height="2.200"/><rect x="1135.500" y="668.500" width="2.200" height="2.200"/></g></svg>
<div class="abs" style="left:0;top:0;width:1141px;height:1px;background:#a3a3a3"></div>
<div class="abs" style="left:0;top:0;width:1px;height:674px;background:#a3a3a3"></div>
<div class="abs" style="left:1140px;top:0;width:1px;height:674px;background:#a3a3a3"></div>
<div class="abs" style="left:0;top:672px;width:1141px;height:2px;background:#a3a3a3"></div>
</div>
</body>
</html>
